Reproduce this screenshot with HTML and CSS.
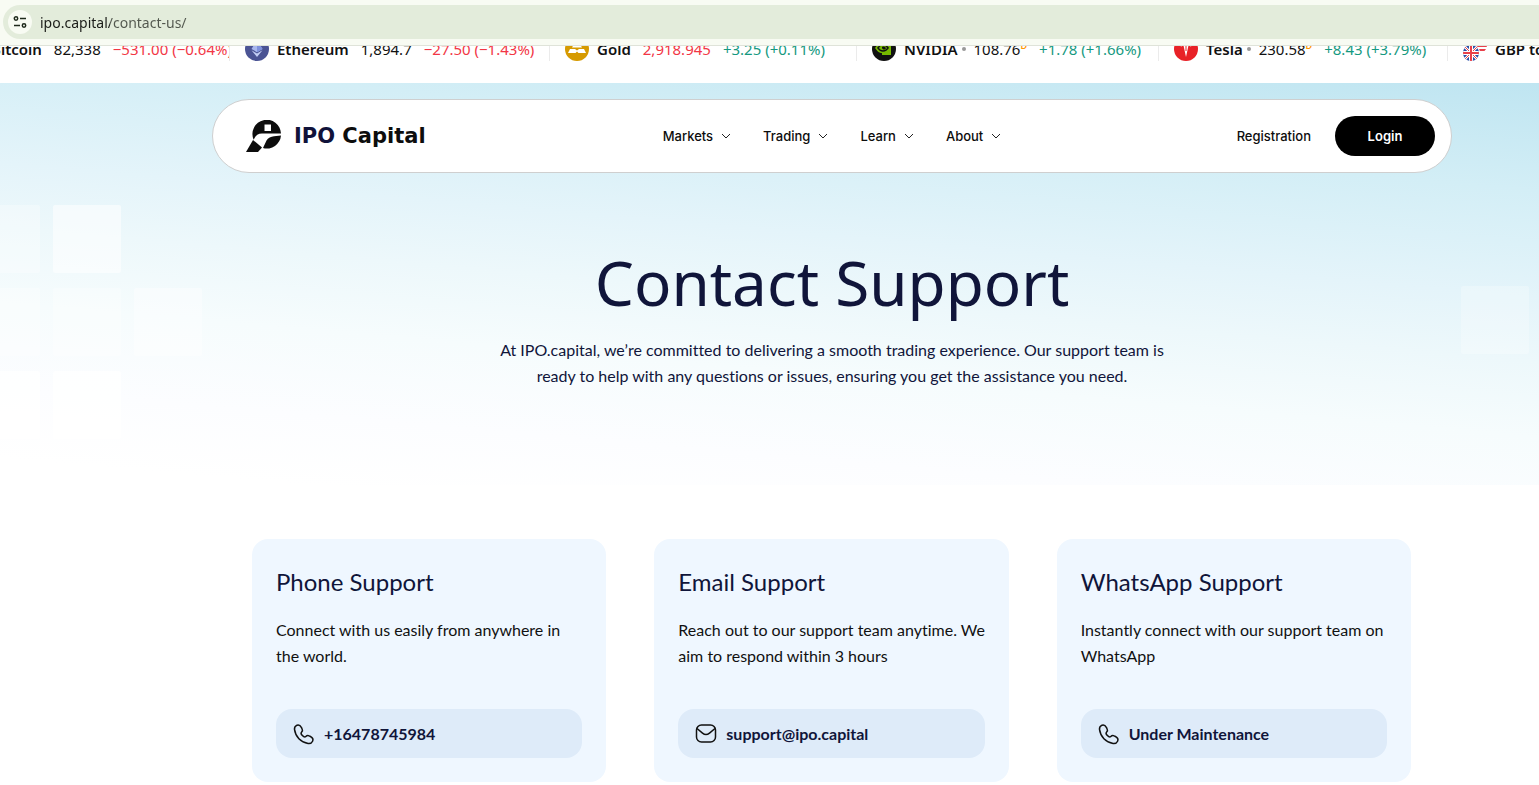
FILE: index.html
```html
<!DOCTYPE html>
<html lang="en">
<head>
  <meta charset="UTF-8" />
  <title>Contact Support - IPO Capital</title>
  <link rel="stylesheet" href="styles.css">
</head>
<body>
  <!-- Address bar -->
  <div class="browser-bar">
    <div class="address">
      <button class="site-info" type="button" aria-label="Site information">
        <svg width="16" height="16" viewBox="0 0 16 16" fill="none" stroke="#1f2a1c" stroke-width="1.500">
          <circle cx="4" cy="4.500" r="1.700"/>
          <path d="M8 4.500h6M2 11.500h6"/>
          <circle cx="12" cy="11.500" r="1.700"/>
        </svg>
      </button>
      <input class="url" type="text" aria-label="Address" value="ipo.capital/contact-us/">
    </div>
  </div>

  <!-- Ticker -->
  <div class="ticker">
    <div class="ticker-row">
      <div class="quote">
        <svg class="coin" viewBox="0 0 24 24"><circle cx="12" cy="12" r="12" fill="#f7931a"/></svg>
        <strong>Bitcoin</strong><span>82,338</span><span class="down">−531.00 (−0.64%)</span>
      </div>
      <div class="quote">
        <svg class="coin" viewBox="0 0 24 24">
          <circle cx="12" cy="12" r="12" fill="#4b5494"/>
          <path d="M12 3l-5.500 9 5.500 3.200 5.500-3.200z" fill="#a9b8ee"/>
          <path d="M12 3v12.200l5.500-3.200z" fill="#7f92dc"/>
          <path d="M6.500 13.300L12 20l5.500-6.700-5.500 3.200z" fill="#c3cef5"/>
        </svg>
        <strong>Ethereum</strong><span>1,894.7</span><span class="down">−27.50 (−1.43%)</span>
      </div>
      <div class="quote">
        <svg class="coin" viewBox="0 0 24 24">
          <circle cx="12" cy="12" r="12" fill="#d69a00"/>
          <path d="M9 7h6l2 3.500H7zM5 12h5l2 1.500 2-1.500h5l2 4h-7.500L12 14.500 10.500 16H3z" fill="#fff"/>
        </svg>
        <strong>Gold</strong><span class="down">2,918.945</span><span class="up">+3.25 (+0.11%)</span>
      </div>
      <div class="quote">
        <svg class="coin" viewBox="0 0 24 24">
          <circle cx="12" cy="12" r="12" fill="#111"/>
          <path d="M10 6h9v12h-9z" fill="#76b900"/>
          <path d="M4 11c4-6 11-5 14 0-4 6-10 6-14 0z" fill="#111" stroke="#76b900" stroke-width="1.500"/>
          <path d="M7 11c2-4 6-3 8 0-2 3-6 3-8 0z" fill="#76b900"/>
          <path d="M10 10c2-1 3 0 4 1-1 2-3 2-4 0z" fill="#111"/>
        </svg>
        <strong>NVIDIA<i class="dot"></i></strong><span>108.76<sup>D</sup></span><span class="up">+1.78 (+1.66%)</span>
      </div>
      <div class="quote">
        <svg class="coin" viewBox="0 0 24 24">
          <circle cx="12" cy="12" r="12" fill="#e82127"/>
          <path d="M12 20L9.500 8.500 7 9.500 5 7c4-2 10-2 14 0l-2 2.500-2.500-1z" fill="#fff"/>
          <path d="M12 8v6" stroke="#e82127"/>
        </svg>
        <strong>Tesla<i class="dot"></i></strong><span>230.58<sup>D</sup></span><span class="up">+8.43 (+3.79%)</span>
      </div>
      <div class="quote">
        <svg class="coin" viewBox="0 0 24 24">
          <clipPath id="us"><circle cx="16" cy="8" r="8"/></clipPath>
          <clipPath id="uk"><circle cx="8" cy="16" r="8"/></clipPath>
          <g clip-path="url(#us)">
            <path d="M8 0h16v16H8z" fill="#fff"/>
            <path d="M8 1h16M8 5h16M8 9h16M8 13h16" stroke="#e8404a" stroke-width="2"/>
          </g>
          <circle cx="8" cy="16" r="9" fill="#fff"/>
          <g clip-path="url(#uk)">
            <path d="M0 8h16v16H0z" fill="#2a4fa8"/>
            <path d="M0 8l16 16M16 8L0 24" stroke="#fff" stroke-width="2.500"/>
            <path d="M0 8l16 16M16 8L0 24" stroke="#e8404a"/>
            <path d="M8 8v16M0 16h16" stroke="#fff" stroke-width="4"/>
            <path d="M8 8v16M0 16h16" stroke="#e8404a" stroke-width="2"/>
          </g>
        </svg>
        <strong>GBP to USD</strong>
      </div>
    </div>
  </div>

  <!-- Hero -->
  <header class="hero">
    <svg class="squares squares-left" width="204" height="236" fill="#fff">
      <rect x="-28" y="0" width="68" height="68" rx="2" opacity=".3"/>
      <rect x="53" y="0" width="68" height="68" rx="2" opacity=".55"/>
      <rect x="-28" y="83" width="68" height="68" rx="2" opacity=".3"/>
      <rect x="53" y="83" width="68" height="68" rx="2" opacity=".3"/>
      <rect x="134" y="83" width="68" height="68" rx="2" opacity=".4"/>
      <rect x="-28" y="166" width="68" height="68" rx="2" opacity=".7"/>
      <rect x="53" y="166" width="68" height="68" rx="2" opacity=".7"/>
    </svg>
    <svg class="squares squares-right" width="68" height="151" fill="#fff">
      <rect x="0" y="81" width="68" height="68" rx="2" opacity=".25"/>
    </svg>

    <nav class="navbar">
      <a class="logo" href="#">
        <svg width="36" height="32" viewBox="0 0 36 32" fill="#0d0d0d">
          <path d="M7.600 19.800A14.300 14.300 0 1 1 35 13.500H16C12 13.500 9.500 15.500 7.600 19.800z"/>
          <path d="M17 28.100L20.500 20.500C22 17.500 25 16.500 28 16.200L35 15.400A14.300 14.300 0 0 1 17 28.100z"/>
          <path d="M7 20l9 7.500-4 4.500H0z"/>
          <path d="M18.500 4.500H25V11h-6.500z" fill="#fff"/>
        </svg>
        <span><span class="logo-ipo">IPO</span> Capital</span>
      </a>
      <div class="menu">
        <button type="button">Markets <svg width="10" height="6" viewBox="0 0 10 6"><path d="M1 1l4 4 4-4"/></svg></button>
        <button type="button">Trading <svg width="10" height="6" viewBox="0 0 10 6"><path d="M1 1l4 4 4-4"/></svg></button>
        <button type="button">Learn <svg width="10" height="6" viewBox="0 0 10 6"><path d="M1 1l4 4 4-4"/></svg></button>
        <button type="button">About <svg width="10" height="6" viewBox="0 0 10 6"><path d="M1 1l4 4 4-4"/></svg></button>
      </div>
      <div class="account">
        <a href="#">Registration</a>
        <a class="login" href="#">Login</a>
      </div>
    </nav>

    <div class="intro">
      <h1>Contact Support</h1>
      <p>At IPO.capital, we’re committed to delivering a smooth trading experience. Our support team is ready to help with any questions or issues, ensuring you get the assistance you need.</p>
    </div>
  </header>

  <!-- Contact cards -->
  <main class="cards">
    <section class="card">
      <h2>Phone Support</h2>
      <p>Connect with us easily from anywhere in the world.</p>
      <a class="contact" href="tel:+16478745984">
        <svg width="24" height="24" viewBox="0 0 24 24"><path d="M9.500 5.600l.6 1.200c.6 1.100.4 2.400-.6 3.400 0 0-1.200 1.200.9 3.400s3.400.9 3.400.9c1-1 2.300-1.200 3.400-.6l1.200.6c1.700.9 3.100 2.800 2.200 4.700-.9 1.800-2.600 2.600-4.500 2.300C8.800 20.200 3.400 14.600 2.500 7.400 2.300 5.700 3.400 4 5 3.200c1.900-.8 3.600.7 4.500 2.400z"/></svg>
        +16478745984
      </a>
    </section>
    <section class="card">
      <h2>Email Support</h2>
      <p>Reach out to our support team anytime. We aim to respond within 3 hours</p>
      <a class="contact" href="mailto:support@ipo.capital">
        <svg width="24" height="24" viewBox="0 0 24 24"><rect x="2.500" y="3" width="19" height="17" rx="5"/><path d="M3 6.500l5.500 4.600c2.300 1.900 4.700 1.900 7 0L21 6.500"/></svg>
        support@ipo.capital
      </a>
    </section>
    <section class="card">
      <h2>WhatsApp Support</h2>
      <p>Instantly connect with our support team on WhatsApp</p>
      <a class="contact" href="#">
        <svg width="24" height="24" viewBox="0 0 24 24"><path d="M9.500 5.600l.6 1.200c.6 1.100.4 2.400-.6 3.400 0 0-1.200 1.200.9 3.400s3.400.9 3.400.9c1-1 2.300-1.200 3.400-.6l1.200.6c1.700.9 3.100 2.800 2.200 4.700-.9 1.800-2.600 2.600-4.500 2.300C8.800 20.200 3.400 14.600 2.500 7.400 2.300 5.700 3.400 4 5 3.200c1.900-.8 3.600.7 4.500 2.400z"/></svg>
        Under Maintenance
      </a>
    </section>
  </main>
</body>
</html>
```

FILE: styles.css
```css
* {
  box-sizing: border-box;
}
body {
  margin: 0;
  background: #fff;
  color: #111;
  font-family: Lato, sans-serif;
  font-size: 16px;
  font-variant-ligatures: none;
  line-height: 26px;
  overflow-x: hidden;
}
h1, h2, p {
  margin: 0;
}
a {
  color: inherit;
  text-decoration: none;
}
button {
  border: 0;
  padding: 0;
  background: none;
  color: inherit;
  font: inherit;
}

/* Address bar */
.browser-bar {
  height: 46px;
  padding: 5px 0 0 3px;
  background: #f8fbf3;
  border-bottom: 1px solid #dfe3d9;
}
.address {
  display: flex;
  align-items: center;
  gap: 8px;
  height: 34px;
  padding-left: 5px;
  border-radius: 17px 0 0 17px;
  background: #e3ecdb;
}
.site-info {
  display: flex;
  align-items: center;
  justify-content: center;
  width: 24px;
  height: 24px;
  border-radius: 50%;
  background: #f8fbf3;
}
.url {
  flex: 1;
  border: 0;
  padding: 0;
  outline: none;
  font: 14px "Noto Sans", sans-serif;
  background: linear-gradient(to right, #1a1c18 70px, #51564d 70px);
  background-clip: text;
  color: transparent;
}

/* Ticker */
.ticker {
  height: 37px;
  overflow: hidden;
  background: #fff;
}
.ticker-row {
  display: grid;
  grid-template-columns: 286px 320px 307px 302px 289px 200px;
  margin: -9px 0 0 -56px;
}
.quote {
  display: flex;
  align-items: center;
  gap: 12px;
  height: 24px;
  padding-left: 15px;
  border-right: 1px solid #ebebeb;
  overflow: hidden;
  white-space: nowrap;
  font-family: "Noto Sans", sans-serif;
  font-size: 15px;
}
.quote strong {
  display: flex;
  align-items: center;
  gap: 4px;
  margin-left: -4px;
  font-weight: 600;
}
.quote .down {
  color: #f23645;
}
.quote .up {
  color: #159980;
}
.quote sup {
  color: #ff9800;
  font-size: 9px;
  font-weight: 600;
  line-height: 8px;
}
.coin {
  flex: none;
  width: 24px;
  height: 24px;
}
.dot {
  width: 4px;
  height: 4px;
  margin-right: -4px;
  border-radius: 50%;
  background: #999;
}

/* Hero */
.hero {
  position: relative;
  padding: 16px 87px 96px 212px;
  background: linear-gradient(185deg, #bfe5f1 0%, #d3eef6 20%, #e4f4fa 40%, #edf8fb 52%, #f6fcfd 66%, #fcfdff 82%, #fff 95%);
}
.squares {
  position: absolute;
  top: 122px;
}
.squares-left {
  left: 0;
}
.squares-right {
  right: 10px;
}

/* Navbar */
.navbar {
  position: relative;
  display: grid;
  grid-template-columns: 1fr auto 1fr;
  align-items: center;
  height: 74px;
  padding: 0 16px;
  border: 1px solid #cfcfcf;
  border-radius: 37px;
  background: #fff;
  color: #0d0d0d;
  font-family: Inter, sans-serif;
  font-size: 13px;
  font-weight: 500;
}
.logo {
  display: flex;
  align-items: center;
  gap: 12px;
  padding-left: 17px;
  font-family: "DejaVu Sans", sans-serif;
  font-size: 21px;
  font-weight: bold;
  white-space: nowrap;
}
.logo-ipo {
  color: #10123a;
}
.menu {
  display: flex;
  gap: 32px;
}
.menu button {
  display: flex;
  align-items: center;
  gap: 8px;
}
.menu svg {
  fill: none;
  stroke: #222;
  stroke-width: 1;
}
.account {
  display: flex;
  align-items: center;
  justify-content: flex-end;
  gap: 24px;
}
.login {
  width: 100px;
  border-radius: 20px;
  background: #000;
  color: #fff;
  font-weight: 600;
  line-height: 40px;
  text-align: center;
}

/* Heading */
.intro {
  position: relative;
  max-width: 700px;
  margin: 0 auto;
  padding-top: 70px;
  color: #10153a;
  text-align: center;
}
.intro h1 {
  margin-bottom: 16px;
  font-family: "Noto Sans", sans-serif;
  font-size: 62px;
  font-weight: 400;
  line-height: 78px;
}

/* Cards */
.cards {
  display: grid;
  grid-template-columns: repeat(3, 1fr);
  gap: 48px;
  padding: 54px 128px 0 252px;
}
.card {
  padding: 24px;
  border-radius: 16px;
  background: #eff7ff;
}
.card h2 {
  margin-bottom: 16px;
  color: #10153a;
  font-size: 24px;
  font-weight: 400;
  line-height: 38px;
}
.card p {
  margin-right: -2px;
}
.contact {
  display: flex;
  align-items: center;
  gap: 8px;
  height: 49px;
  margin-top: 40px;
  padding: 0 16px;
  border-radius: 16px;
  background: #deebf9;
  color: #10153a;
  font-weight: 700;
}
.contact svg {
  fill: none;
  stroke: #111;
  stroke-width: 1.500;
}
```
